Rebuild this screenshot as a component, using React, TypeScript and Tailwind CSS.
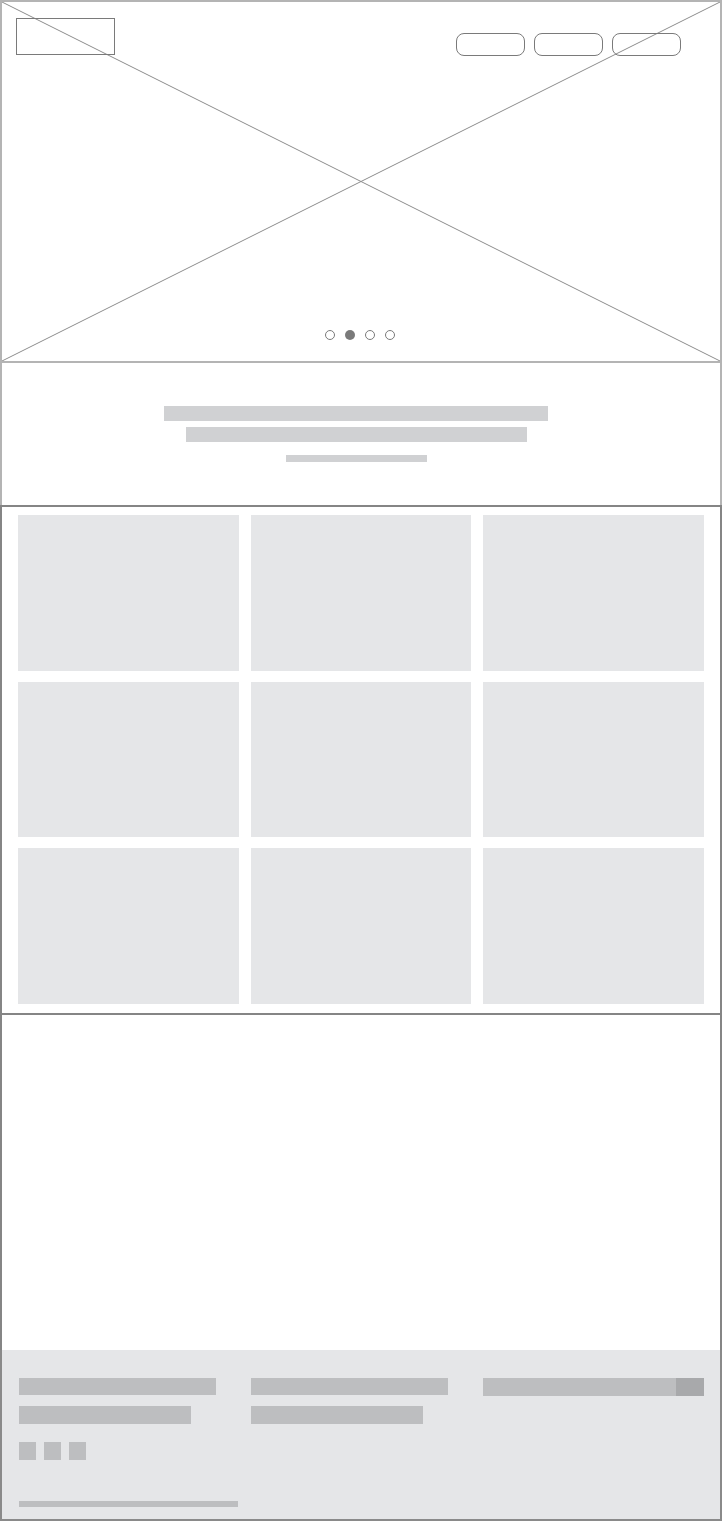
// Wireframe landing page: hero slider, intro text, 3x3 card grid, empty band, footer.

const cards = Array.from({ length: 9 });

function HeroCross() {
  return (
    <svg className="absolute inset-0 h-full w-full" viewBox="0 0 718 361" preserveAspectRatio="none">
      <line x1="0" y1="0" x2="718" y2="361" stroke="#8c8c8c" strokeWidth="1" />
      <line x1="0" y1="361" x2="718" y2="0" stroke="#8c8c8c" strokeWidth="1" />
    </svg>
  );
}

function Hero() {
  return (
    <div className="relative h-[363px] border-x-2 border-t-2 border-b-2 border-[#b4b4b4]">
      <HeroCross />
      <div className="relative flex items-start justify-between pl-[14px] pr-[39px] pt-4">
        <div className="h-[37px] w-[99px] border border-[#7a7a7a]" />
        <div className="mt-[15px] flex gap-[9px]">
          {[0, 1, 2].map((i) => (
            <div key={i} className="h-[23px] w-[69px] rounded-lg border border-[#7a7a7a]" />
          ))}
        </div>
      </div>
      <div className="absolute left-0 right-0 top-[328px] flex justify-center gap-[10px] pr-[2px]">
        {[0, 1, 2, 3].map((i) => (
          <div
            key={i}
            className={
              i === 1
                ? "h-[10px] w-[10px] rounded-full bg-[#7a7a7a]"
                : "h-[10px] w-[10px] rounded-full border border-[#7a7a7a] bg-white"
            }
          />
        ))}
      </div>
    </div>
  );
}

function Intro() {
  return (
    <div className="flex h-[142px] flex-col items-center border-x-2 border-[#b4b4b4] pr-[10px] pt-[43px]">
      <div className="h-[15px] w-[384px] bg-[#d0d1d3]" />
      <div className="mt-[6px] h-[15px] w-[341px] bg-[#d0d1d3]" />
      <div className="mt-[13px] h-[7px] w-[141px] bg-[#d0d1d3]" />
    </div>
  );
}

function CardGrid() {
  return (
    <div className="grid grid-cols-3 gap-x-3 gap-y-[11px] border-2 border-[#858585] px-4 pb-[9px] pt-2">
      {cards.map((_, i) => (
        <div key={i} className="h-[155.5px] bg-[#e5e6e8]" />
      ))}
    </div>
  );
}

function Footer() {
  return (
    <div className="grid h-[171px] grid-cols-3 gap-x-3 border-x-2 border-b-2 border-[#8a8a8a] bg-[#e5e6e8] px-4 pt-[28px]">
      <div className="flex flex-col pl-[1px]">
        <div className="h-[17px] w-[197px] bg-[#bdbec0]" />
        <div className="mt-[11px] h-[18px] w-[172px] bg-[#bdbec0]" />
        <div className="mt-[18px] flex gap-2">
          {[0, 1, 2].map((i) => (
            <div key={i} className="h-[18px] w-[17px] bg-[#bdbec0]" />
          ))}
        </div>
        <div className="mt-[41px] h-[6px] w-[219px] bg-[#bdbec0]" />
      </div>
      <div className="flex flex-col">
        <div className="h-[17px] w-[197px] bg-[#bdbec0]" />
        <div className="mt-[11px] h-[18px] w-[172px] bg-[#bdbec0]" />
      </div>
      <div className="flex">
        <div className="h-[18px] flex-1 bg-[#bdbec0]" />
        <div className="h-[18px] w-[28px] bg-[#a8a9ab]" />
      </div>
    </div>
  );
}

export default function App() {
  return (
    <div className="w-[722px] bg-white">
      <Hero />
      <Intro />
      <CardGrid />
      <div className="h-[335.5px] border-x-2 border-[#858585]" />
      <Footer />
    </div>
  );
}
